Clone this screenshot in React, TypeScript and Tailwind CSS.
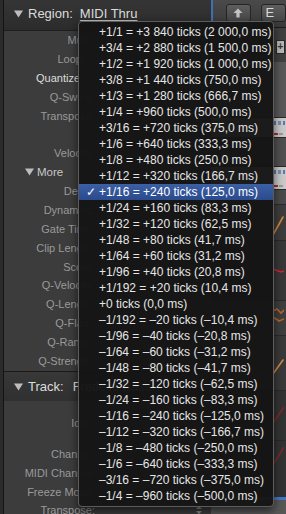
import React from 'react';

const menuItems = [
  '+1/1 = +3 840 ticks (2 000,0 ms)',
  '+3/4 = +2 880 ticks (1 500,0 ms)',
  '+1/2 = +1 920 ticks (1 000,0 ms)',
  '+3/8 = +1 440 ticks (750,0 ms)',
  '+1/3 = +1 280 ticks (666,7 ms)',
  '+1/4 = +960 ticks (500,0 ms)',
  '+3/16 = +720 ticks (375,0 ms)',
  '+1/6 = +640 ticks (333,3 ms)',
  '+1/8 = +480 ticks (250,0 ms)',
  '+1/12 = +320 ticks (166,7 ms)',
  '+1/16 = +240 ticks (125,0 ms)',
  '+1/24 = +160 ticks (83,3 ms)',
  '+1/32 = +120 ticks (62,5 ms)',
  '+1/48 = +80 ticks (41,7 ms)',
  '+1/64 = +60 ticks (31,2 ms)',
  '+1/96 = +40 ticks (20,8 ms)',
  '+1/192 = +20 ticks (10,4 ms)',
  '+0 ticks (0,0 ms)',
  '–1/192 = –20 ticks (–10,4 ms)',
  '–1/96 = –40 ticks (–20,8 ms)',
  '–1/64 = –60 ticks (–31,2 ms)',
  '–1/48 = –80 ticks (–41,7 ms)',
  '–1/32 = –120 ticks (–62,5 ms)',
  '–1/24 = –160 ticks (–83,3 ms)',
  '–1/16 = –240 ticks (–125,0 ms)',
  '–1/12 = –320 ticks (–166,7 ms)',
  '–1/8 = –480 ticks (–250,0 ms)',
  '–1/6 = –640 ticks (–333,3 ms)',
  '–3/16 = –720 ticks (–375,0 ms)',
  '–1/4 = –960 ticks (–500,0 ms)',
];

const SELECTED = 10;

const regionRows = [
  { label: 'Mute:' },
  { label: 'Loop:', pad: 'pr-[10px]' },
  { label: 'Quantize', pad: 'pr-[15px]', bright: true },
  { label: 'Q-Swing:' },
  { label: 'Transpose:' },
  { label: '' },
  { label: 'Velocity:' },
  { label: 'More', more: true },
  { label: 'Delay:' },
  { label: 'Dynamics:' },
  { label: 'Gate Time:' },
  { label: 'Clip Length:' },
  { label: 'Score:' },
  { label: 'Q-Velocity:' },
  { label: 'Q-Length:' },
  { label: 'Q-Flam:' },
  { label: 'Q-Range:' },
  { label: 'Q-Strength:' },
];

const Triangle = () => (
  <svg width="9" height="8" viewBox="0 0 9 8" className="shrink-0">
    <path d="M0 0.5 H9 L4.5 7.5 Z" fill="#bdbdbd" />
  </svg>
);

const Label = ({ text, pad = '', bright = false }: { text: string; pad?: string; bright?: boolean }) => (
  <div
    className={`w-[91px] text-right text-[11px] leading-[14px] whitespace-nowrap ${pad} ${
      bright ? 'text-[#dedede]' : 'text-[#9a9a9a]'
    }`}
  >
    {text}
  </div>
);

const Inspector = () => (
  <div className="w-[211px] h-full pl-[3px] bg-[#2b2b2b] shrink-0">
    <div className="h-full border-l border-[#141414] bg-[#3c3c3c] flex flex-col">
      {/* Region header */}
      <div className="h-[31px] shrink-0 flex items-start pt-[6px] pl-[10px] gap-[5px] bg-linear-to-b from-[#353535] to-[#2c2c2c] border-b border-[#1f1f1f] text-[13px] leading-[15px] text-[#dcdcdc]">
        <div className="pt-[4px]">
          <Triangle />
        </div>
        <span>Region:</span>
        <span className="ml-[2px] underline underline-offset-[2px] decoration-[#bdbdbd]">MIDI Thru</span>
      </div>

      {/* Region rows */}
      <div className="flex flex-col">
        {regionRows.map((r, i) =>
          r.more ? (
            <div key={i} className="h-[18.85px] flex items-center pl-[21px] gap-[3px]">
              <Triangle />
              <span className="text-[11.5px] text-[#c8c8c8]">More</span>
            </div>
          ) : (
            <div key={i} className="h-[18.85px] flex items-center">
              <Label text={r.label} pad={r.pad} bright={r.bright} />
            </div>
          )
        )}
      </div>

      {/* Track header */}
      <div className="h-[30px] shrink-0 mt-[1px] flex items-center pl-[10px] gap-[5px] bg-linear-to-b from-[#383838] to-[#303030] border-t border-[#1a1a1a] text-[13px] text-[#dcdcdc]">
        <Triangle />
        <span>Track:</span>
        <span className="ml-[4px]">Fretless Bass</span>
      </div>

      <div className="flex flex-col">
        <div className="h-[44px] flex items-center">
          <Label text="Icon:" />
        </div>
        <div className="h-[18.6px] flex items-center">
          <Label text="Channel:" />
        </div>
        <div className="h-[18.6px] flex items-center">
          <Label text="MIDI Channel:" />
        </div>
        <div className="h-[18.6px] flex items-center">
          <Label text="Freeze Mode:" />
        </div>
        <div className="h-[18.6px] flex items-center">
          <Label text="Transpose:" />
          <div className="ml-[101px] flex flex-col items-center text-[#8a8a8a]">
            <svg width="6" height="10" viewBox="0 0 6 10">
              <path d="M0 4 L3 1 L6 4 Z M0 6 L3 9 L6 6 Z" fill="#8a8a8a" />
            </svg>
          </div>
        </div>
      </div>
    </div>
  </div>
);

const Thumb = ({ h }: { h: string }) => (
  <div className={`${h} bg-[#c9c9c9] flex flex-col justify-between border-y border-[#2a2a2a]`}>
    <div className="flex gap-[2px] pt-[3px] pl-[63px]">
      <div className="w-[2px] h-[4px] bg-[#5a7bb0]" />
      <div className="w-[3px] h-[4px] bg-[#7c8ea8]" />
      <div className="w-[2px] h-[4px] bg-[#5a7bb0]" />
    </div>
    <div className="flex gap-[1px] pl-[62px] pb-[2px]">
      <div className="w-[5px] h-[2px] bg-[#b02a2a]" />
      <div className="w-[4px] h-[2px] bg-[#9a9a9a]" />
    </div>
  </div>
);

const Stroke = ({ h, color, d }: { h: number; color: string; d: string }) => (
  <svg width="73" height={h} viewBox={`0 0 73 ${h}`} className="block">
    <path d={d} stroke={color} strokeWidth="1.6" fill="none" strokeLinecap="round" />
  </svg>
);

const Arrange = () => (
  <div className="flex-1 h-full flex flex-col overflow-hidden">
    {/* toolbar */}
    <div className="h-[27px] shrink-0 flex items-start pt-[4px] bg-linear-to-b from-[#4a4a4a] to-[#3a3a3a] border-l-2 border-[#3d6fb8]">
      <div className="ml-[13px] w-[30px] h-[18px] rounded-[3px] border border-[#252525] bg-linear-to-b from-[#5e5e5e] to-[#464646] flex items-center justify-center">
        <svg width="10" height="10" viewBox="0 0 10 10">
          <path d="M5 0.5 L9.5 5 H6.6 V9.5 H3.4 V5 H0.5 Z" fill="#c4c4c4" />
        </svg>
      </div>
      <div className="ml-[10px] w-[30px] h-[18px] rounded-[3px] border border-[#252525] bg-linear-to-b from-[#5e5e5e] to-[#464646] pl-[4px] text-[13px] leading-[16px] text-[#dadada]">
        E
      </div>
    </div>
    <div className="h-px shrink-0 bg-[#1a1a1a]" />

    {/* track lanes */}
    <div className="h-[34px] shrink-0 bg-[#404040] flex justify-end items-start pt-[12px] pr-[1px]">
      <div className="w-[9px] h-[14px] bg-[#b8b8b8] border border-[#2a2a2a] flex items-center justify-center text-[10px] leading-none text-[#333] font-bold">
        +
      </div>
    </div>
    <div className="h-[55px] shrink-0 bg-[#585858]" />
    <Thumb h="h-[21px] shrink-0" />
    <div className="h-[28px] shrink-0 bg-[#505050]" />
    <Thumb h="h-[24px] shrink-0" />
    <div className="h-[15px] shrink-0 bg-[#4a4a4a] border-b border-[#2c2c2c]" />
    <div className="h-[35px] shrink-0 bg-[#3d3d3d]">
      <Stroke h={35} color="#d0873a" d="M62 30 L72 12" />
    </div>
    <div className="h-[60px] shrink-0 bg-[#383838] border-t border-[#2a2a2a]">
      <Stroke h={60} color="#d0282f" d="M62 28 L70 31 L73 30" />
    </div>
    <div className="h-[35px] shrink-0 bg-[#3e3e3e] border-t border-[#2a2a2a]">
      <Stroke h={35} color="#b4652e" d="M62 10 L66 8 L70 12 L73 9 M62 16 L68 20 L73 18" />
    </div>
    <div className="h-[55px] shrink-0 bg-[#393939] border-t border-[#2a2a2a]">
      <Stroke h={55} color="#cf8b3e" d="M62 38 L72 24" />
    </div>
    <div className="h-[50px] shrink-0 bg-[#333333] border-t border-[#2a2a2a]">
      <Stroke h={50} color="#7a2a2a" d="M62 32 L73 16" />
    </div>
    <div className="h-[57px] shrink-0 bg-[#333333] border-t border-[#2a2a2a]">
      <Stroke h={57} color="#7a2a2a" d="M62 24 L73 6" />
    </div>
    <div className="h-[3px] shrink-0 bg-[#4677c4]" />
    <div className="flex-1 bg-[#585858]" />
  </div>
);

const QuantizeMenu = () => (
  <div className="absolute left-[78px] top-[21px] w-[196px] h-[486px] rounded-[4px] border border-[#5c5c5c] bg-[#151515]/[0.97] py-[2px] shadow-[0_4px_10px_rgba(0,0,0,0.6)]">
    {menuItems.map((item, i) => {
      const sel = i === SELECTED;
      return (
        <div
          key={item}
          className={`h-[16px] flex items-center text-[12px] leading-[16px] whitespace-nowrap ${
            sel ? 'bg-linear-to-b from-[#3c60a6] to-[#2a4a8c] text-white' : 'text-[#e6e6e6]'
          }`}
        >
          <span className="w-[20px] pl-[7px] text-[12px]">{sel ? '✓' : ''}</span>
          <span>{item}</span>
        </div>
      );
    })}
  </div>
);

export default function App() {
  return (
    <div className="relative w-[286px] h-[514px] overflow-hidden bg-[#262626] font-['Liberation_Sans',Arial,sans-serif]">
      <div className="flex h-full">
        <Inspector />
        <Arrange />
      </div>
      <QuantizeMenu />
    </div>
  );
}
